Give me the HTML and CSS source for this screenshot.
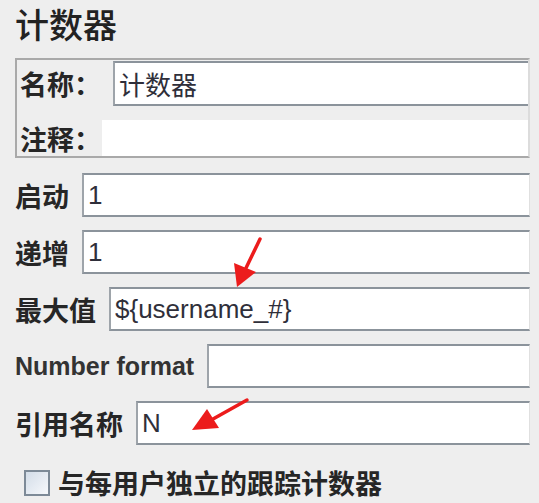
FILE: index.html
```html
<!DOCTYPE html>
<html>
<head>
    <title>计数器</title>
    <link rel="stylesheet" href="styles.css">
</head>
<body>
    <div class="panel">
        <h1 class="title">计数器</h1>

        <div class="group">
            <div class="group-row">
                <label class="label name-label">名称：</label>
                <input class="field" type="text" value="计数器">
            </div>
            <div class="group-row comment-row">
                <label class="label">注释：</label>
                <div class="comment-field"></div>
            </div>
        </div>

        <div class="row first">
            <label class="label">启动</label>
            <input class="field" type="text" value="1">
        </div>
        <div class="row">
            <label class="label">递增</label>
            <input class="field" type="text" value="1">
        </div>
        <div class="row">
            <label class="label">最大值</label>
            <input class="field" type="text" value="${username_#}">
        </div>
        <div class="row">
            <label class="label latin">Number format</label>
            <input class="field" type="text" value="">
        </div>
        <div class="row">
            <label class="label">引用名称</label>
            <input class="field" type="text" value="N">
        </div>

        <div class="check-row">
            <span class="checkbox"></span>
            <span class="check-label">与每用户独立的跟踪计数器</span>
        </div>

        <!-- red annotation arrows drawn over the form -->
        <svg class="arrows" width="539" height="503" viewBox="0 0 539 503">
            <line x1="260" y1="239" x2="246" y2="268" stroke="#ec1c1c" stroke-width="3.5" stroke-linecap="round"/>
            <polygon points="237,287 234,263 256,272" fill="#ec1c1c"/>
            <line x1="247" y1="400" x2="213" y2="419" stroke="#ec1c1c" stroke-width="3.5" stroke-linecap="round"/>
            <polygon points="192,430 207,409 219,428" fill="#ec1c1c"/>
        </svg>
    </div>
</body>
</html>
```

FILE: styles.css
```css
html, body {
    margin: 0;
    padding: 0;
    background: #eeeeee;
}
.panel {
    position: relative;
    width: 539px;
    height: 503px;
    padding-left: 15px;
    box-sizing: border-box;
    font-family: "Noto Sans CJK SC", "Liberation Sans", sans-serif;
    color: #262626;
}
.title {
    margin: 0;
    padding-top: 4px;
    font-size: 34px;
    line-height: 40px;
    font-weight: 500;
    color: #222;
}
.group {
    margin-top: 14px;
    width: 515px;
    box-sizing: border-box;
    border: 2px solid #a9a9a9;
    border-right-color: #dcdcdc;
    padding: 1px 0 0 3px;
}
.group-row {
    display: flex;
    align-items: center;
    height: 45px;
}
.comment-row {
    margin-top: 14px;
    height: 36px;
}
.label {
    font-size: 27px;
    line-height: 1;
    font-weight: bold;
    color: #262626;
    white-space: nowrap;
}
.latin {
    font-family: "Liberation Sans", sans-serif;
    font-size: 25px;
    color: #333;
}
.name-label {
    margin-right: 12px;
}
.comment-field {
    flex: 1;
    height: 100%;
    margin-left: 1px;
    background: #fff;
}
.field {
    flex: 1;
    min-width: 0;
    height: 44px;
    box-sizing: border-box;
    margin: 0;
    padding: 0 0 0 4px;
    background: #fff;
    border-style: solid;
    border-width: 2px 1px 2px 2px;
    border-color: #8b939b #e0e0e0 #8b939b #9ea4aa;
    font-family: "Liberation Sans", "Noto Sans CJK SC", sans-serif;
    font-size: 26px;
    color: #2f2f3a;
    outline: none;
}
.group-row .field {
    height: 45px;
    border-right: none;
}
.row {
    display: flex;
    align-items: center;
    gap: 13px;
    width: 515px;
    margin-top: 13px;
}
.row.first {
    margin-top: 15px;
}
.check-row {
    display: flex;
    align-items: center;
    gap: 8px;
    margin-top: 23px;
    padding-left: 9px;
}
.checkbox {
    width: 26px;
    height: 26px;
    box-sizing: border-box;
    border: 2px solid #7d8a97;
    background: linear-gradient(135deg, #d3dde8, #f6f8fb);
}
.check-label {
    font-size: 27px;
    line-height: 30px;
    font-weight: bold;
    color: #262626;
}
.arrows {
    position: absolute;
    top: 0;
    left: 0;
    pointer-events: none;
}
```
